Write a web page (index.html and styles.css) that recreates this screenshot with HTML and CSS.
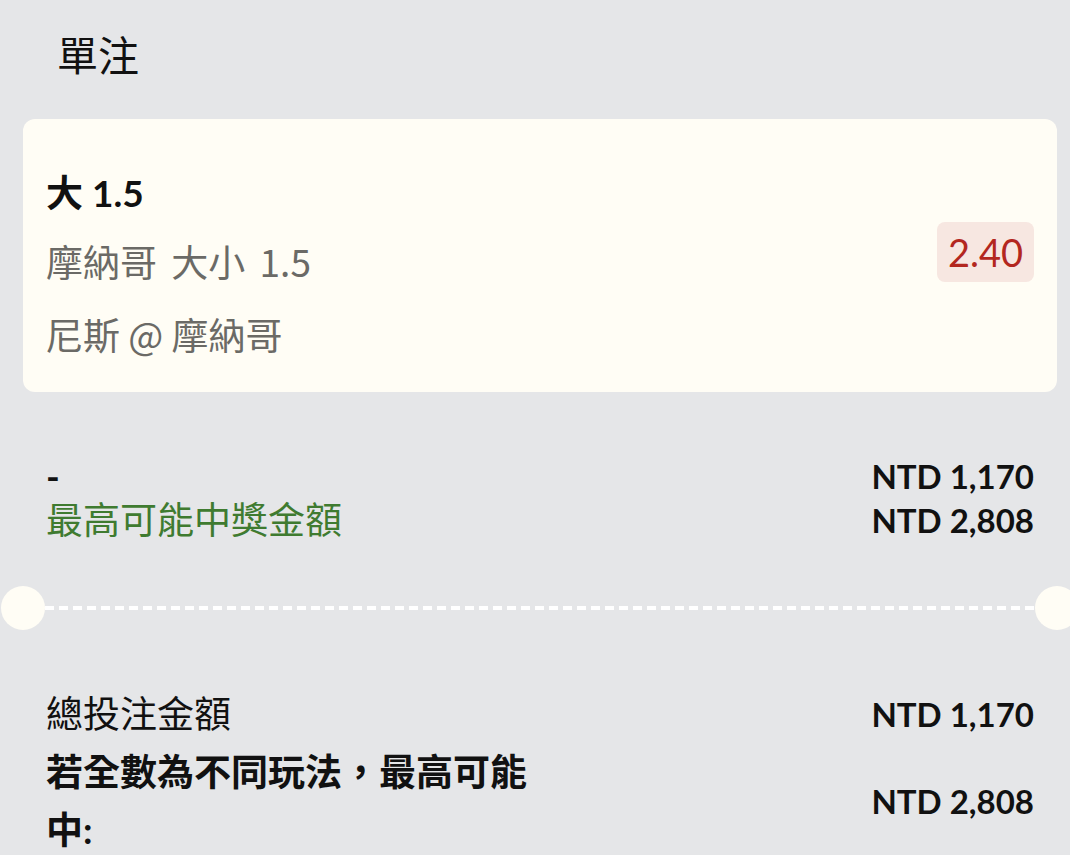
FILE: index.html
```html
<!DOCTYPE html>
<html lang="zh-Hant">
<head>
  <meta charset="UTF-8">
  <meta name="viewport" content="width=device-width, initial-scale=1">
  <title>單注</title>
  <link rel="stylesheet" href="styles.css">
</head>
<body>

<div class="page">
  <!-- Title -->
  <div class="slip-title">單注</div>

  <!-- Bet card -->
  <div class="bet-card">
    <div class="bet-info">
      <div class="bet-pick">大 1.5</div>
      <div class="bet-market">摩納哥 大小 1.5</div>
      <div class="bet-match">尼斯 @ 摩納哥</div>
    </div>
    <div class="odds-badge">2.40</div>
  </div>

  <!-- Stake / possible win -->
  <div class="stake-section">
    <div class="stake-labels">
      <div class="stake-dash">-</div>
      <div class="win-label">最高可能中獎金額</div>
    </div>
    <div class="stake-values">
      <div>NTD 1,170</div>
      <div>NTD 2,808</div>
    </div>
  </div>

  <!-- Ticket separator -->
  <div class="ticket-cut">
    <div class="cut-hole"></div>
    <div class="cut-line"></div>
    <div class="cut-hole"></div>
  </div>

  <!-- Totals -->
  <div class="totals">
    <div class="total-row">
      <div class="total-label">總投注金額</div>
      <div class="total-value">NTD 1,170</div>
    </div>
    <div class="total-row">
      <div class="total-label strong">若全數為不同玩法，最高可能中:</div>
      <div class="total-value">NTD 2,808</div>
    </div>
  </div>
</div>

</body>
</html>
```

FILE: styles.css
```css
html, body {
  overflow-x: hidden;
}
body {
  margin: 0;
  font-family: 'Lato', 'Noto Sans CJK TC', sans-serif;
  background-color: #e5e6e8;
  color: #111;
}
.page {
  padding: 0 13px 0 23px;
}
.slip-title {
  font-size: 41px;
  line-height: 56px;
  padding: 28px 0 0 34px;
  color: #111;
}
.bet-card {
  margin-top: 35px;
  background: #fffdf5;
  border-radius: 12px;
  padding: 52px 23px 36px;
  display: flex;
  align-items: flex-start;
  justify-content: space-between;
}
.bet-info {
  display: flex;
  flex-direction: column;
}
.bet-pick {
  font-size: 37px;
  font-weight: 700;
  line-height: 44px;
  margin-bottom: 24px;
}
.bet-market, .bet-match {
  font-family: 'Noto Sans CJK TC', 'Lato', sans-serif;
  font-size: 37px;
  line-height: 44px;
  color: #6b6a66;
}
.bet-market {
  margin-bottom: 29px;
  word-spacing: 6px;
}
.odds-badge {
  background: #f7e7e1;
  color: #b3271f;
  font-size: 38px;
  line-height: 60px;
  padding: 0 11px;
  border-radius: 8px;
  margin-top: 51px;
}
.stake-section {
  margin-top: 62px;
  padding: 0 23px;
  display: flex;
  justify-content: space-between;
  font-size: 37px;
  line-height: 44px;
}
.stake-dash {
  font-weight: 700;
}
.win-label {
  color: #3f7b30;
}
.stake-values {
  font-size: 33px;
  font-weight: 700;
  text-align: right;
}
.ticket-cut {
  margin: 44px -22px 0;
  display: flex;
  align-items: center;
}
.cut-hole {
  width: 44px;
  height: 44px;
  border-radius: 50%;
  background: #fffdf5;
  flex-shrink: 0;
}
.cut-line {
  flex: 1;
  height: 4px;
  background: repeating-linear-gradient(90deg, #fff 0 9px, transparent 9px 14px);
}
.totals {
  margin-top: 55px;
  padding: 0 23px;
  font-size: 37px;
  line-height: 58px;
}
.total-row {
  display: flex;
  justify-content: space-between;
  align-items: center;
}
.total-label {
  width: 50%;
}
.total-label.strong {
  font-weight: 700;
}
.total-value {
  font-size: 33px;
  font-weight: 700;
  text-align: right;
}
```
